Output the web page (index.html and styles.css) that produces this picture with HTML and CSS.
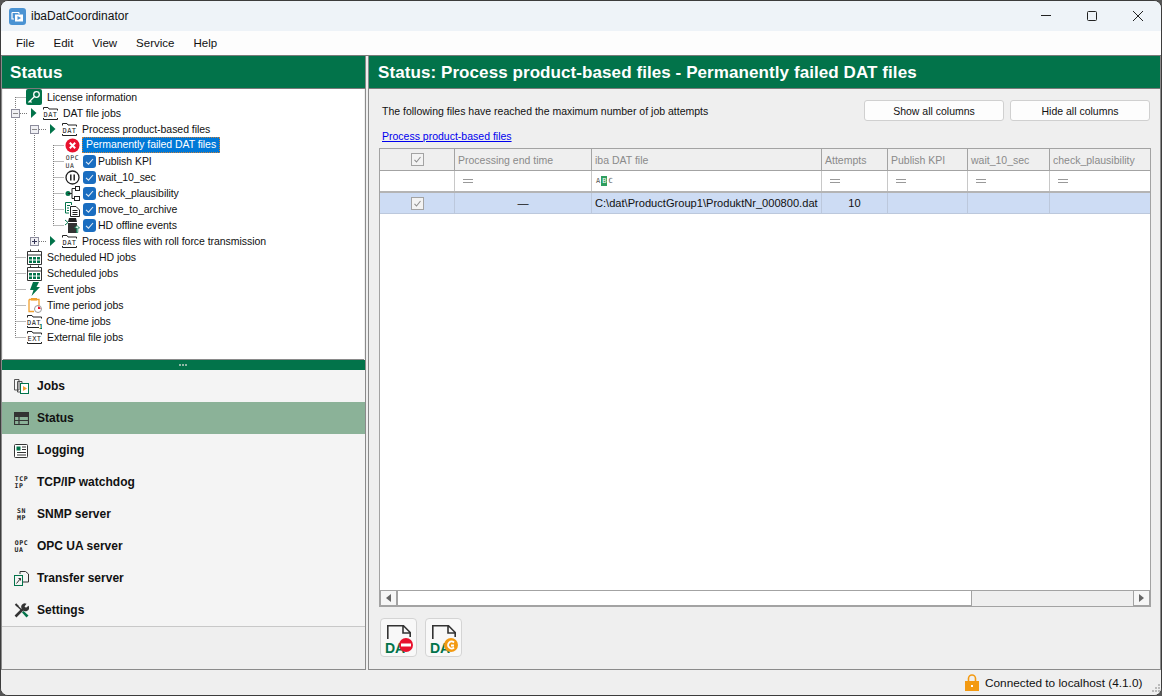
FILE: index.html
```html
<!doctype html>
<html>
	<head>
		<meta charset="utf-8">
		<title>ibaDatCoordinator</title>
		<link rel="stylesheet" href="styles.css">
	</head>
	<body>
		<svg class="defs" width="0" height="0">
			<symbol id="i-folder" viewBox="0 0 15 16">
				<path d="M.5 4.500V2.500H5L6 4H14.500V5.500M.5 13V14.500H14.500V13" fill="none" stroke="#222"/>
			</symbol>
			<symbol id="i-cal" viewBox="0 0 15 16">
				<path d="M.5 2.500H14.500V15.500H.5ZM.5 6H14.500M3.500 .5V3M11.500 .5V3" fill="none" stroke="#333"/>
				<path d="M2 8h3v2.500H2zM6 8h3v2.500H6zM10 8h3v2.500h-3zM2 11.500h3V14H2zM6 11.500h3V14H6zM10 11.500h3V14h-3z" fill="#02734a"/>
			</symbol>
			<symbol id="i-check" viewBox="0 0 13 13">
				<rect width="13" height="13" rx="3" fill="#1a6dc0"/>
				<path d="M3 6.800L5.500 9.200L10 4" fill="none" stroke="#dfeaf6" stroke-width="1.100"/>
			</symbol>
			<symbol id="i-tri" viewBox="0 0 7 10">
				<path d="M1 0L6.500 5L1 10Z" fill="#02734a"/>
			</symbol>
			<symbol id="i-eq" viewBox="0 0 10 5">
				<path d="M0 .5H10M0 3.500H10" stroke="#999"/>
			</symbol>
			<symbol id="i-tick" viewBox="0 0 13 13">
				<rect x=".5" y=".5" width="12" height="12" fill="#f3f3f3" stroke="#a3a3a3"/>
				<path d="M3.500 6.800L5.500 9L9.500 4" fill="none" stroke="#8f8f8f" stroke-width="1.100"/>
			</symbol>
		</svg>

		<div class="window">
			<div class="titlebar">
				<svg class="app-icon" width="17" height="17" viewBox="0 0 17 17">
					<rect width="17" height="17" rx="3" fill="#4b93d3"/>
					<path d="M3 4.500H10M3 4.500V11H5M10 4.500V6" fill="none" stroke="#fff" stroke-width="1.200"/>
					<rect x="6" y="6.500" width="8" height="7" fill="#fff"/>
					<path d="M8.500 8L12 10L8.500 12Z" fill="#4b93d3"/>
				</svg>
				<span class="app-title">ibaDatCoordinator</span>
				<div class="win-buttons">
					<svg width="12" height="12" viewBox="0 0 12 12"><path d="M1 5.500H11" stroke="#222"/></svg>
					<svg width="12" height="12" viewBox="0 0 12 12"><rect x="1.500" y="1.500" width="9" height="9" rx="1" fill="none" stroke="#222"/></svg>
					<svg width="12" height="12" viewBox="0 0 12 12"><path d="M1 1L11 11M11 1L1 11" stroke="#222"/></svg>
				</div>
			</div>

			<div class="menubar">
				<span>File</span>
				<span>Edit</span>
				<span>View</span>
				<span>Service</span>
				<span>Help</span>
			</div>

			<div class="main">
				<div class="left">
					<div class="panel-head">Status</div>
					<div class="tree">
						<svg class="tree-lines" width="70" height="270">
							<path d="M12.500 8V248.500M12.500 8.500H23M12.500 168.500H23M12.500 184.500H23M12.500 200.500H23M12.500 216.500H23M12.500 232.500H23M12.500 248.500H23M31.500 40V152M50.500 56V136.500M50.500 56.500H61M50.500 72.500H61M50.500 88.500H61M50.500 104.500H61M50.500 120.500H61M50.500 136.500H61" fill="none" stroke="#777" stroke-dasharray="1 1"/>
							<path d="M17 24.500H24M36 40.500H43M36 152.500H43" fill="none" stroke="#777" stroke-dasharray="1 1"/>
						</svg>

						<div class="row l0">
							<svg class="icon" width="16" height="16" viewBox="0 0 16 16">
								<rect width="16" height="16" rx="2" fill="#02734a"/>
								<circle cx="10.500" cy="5.500" r="2.800" fill="none" stroke="#fff" stroke-width="1.300"/>
								<path d="M8.500 7.500L2.500 13.500M4 12L5.500 13.500" fill="none" stroke="#fff" stroke-width="1.300"/>
							</svg>
							<span class="label">License information</span>
						</div>
						<div class="row l1">
							<span class="expander minus"></span>
							<svg class="tri" width="7" height="10"><use href="#i-tri"/></svg>
							<svg class="icon" width="15" height="16" viewBox="0 0 15 16">
								<use href="#i-folder" width="15" height="16"/>
								<text x="7.500" y="11.500" class="icon-text big" text-anchor="middle">DAT</text>
							</svg>
							<span class="label">DAT file jobs</span>
						</div>
						<div class="row l2">
							<span class="expander minus"></span>
							<svg class="tri" width="7" height="10"><use href="#i-tri"/></svg>
							<svg class="icon" width="15" height="16" viewBox="0 0 15 16">
								<use href="#i-folder" width="15" height="16"/>
								<text x="7.500" y="11.500" class="icon-text big" text-anchor="middle">DAT</text>
							</svg>
							<span class="label">Process product-based files</span>
						</div>
						<div class="row l3">
							<svg class="icon" width="15" height="15" viewBox="0 0 15 15">
								<circle cx="7.500" cy="7.500" r="7" fill="#e8112d"/>
								<path d="M4.800 4.800L10.200 10.200M10.200 4.800L4.800 10.200" stroke="#fff" stroke-width="2"/>
							</svg>
							<span class="selected">Permanently failed DAT files</span>
						</div>
						<div class="row l3">
							<svg class="icon" width="15" height="16" viewBox="0 0 15 16">
								<text x="7.500" y="6.500" class="icon-text" text-anchor="middle">OPC</text>
								<text x="5" y="14.500" class="icon-text" text-anchor="middle">UA</text>
							</svg>
							<svg class="check" width="13" height="13"><use href="#i-check"/></svg>
							<span class="label">Publish KPI</span>
						</div>
						<div class="row l3">
							<svg class="icon" width="15" height="15" viewBox="0 0 15 15">
								<circle cx="7.500" cy="7.500" r="6.500" fill="none" stroke="#222" stroke-width="1.300"/>
								<path d="M5.800 4.500V10.500M9.200 4.500V10.500" stroke="#222" stroke-width="1.500"/>
							</svg>
							<svg class="check" width="13" height="13"><use href="#i-check"/></svg>
							<span class="label">wait_10_sec</span>
						</div>
						<div class="row l3">
							<svg class="icon" width="15" height="15" viewBox="0 0 15 15">
								<circle cx="3" cy="7.500" r="2.500" fill="#02734a"/>
								<path d="M3 7.500H7V2.500H10M7 7.500V12.500H9" fill="none" stroke="#222"/>
								<rect x="10.500" y=".5" width="4" height="4" fill="#fff" stroke="#222"/>
								<rect x="9.500" y="10.500" width="5" height="4" fill="#fff" stroke="#222"/>
							</svg>
							<svg class="check" width="13" height="13"><use href="#i-check"/></svg>
							<span class="label">check_plausibility</span>
						</div>
						<div class="row l3">
							<svg class="icon" width="15" height="15" viewBox="0 0 15 15">
								<path d="M.5 .5H6.500V3M.5 .5V11H4M2 3.500H5M2 6H4M2 8.500H4" fill="none" stroke="#02734a"/>
								<path d="M5.500 4.500H11L14.500 8V14.500H5.500ZM7.500 8.500H12.500M7.500 10.500H12.500M7.500 12.500H12.500" fill="#fff" stroke="#222"/>
							</svg>
							<svg class="check" width="13" height="13"><use href="#i-check"/></svg>
							<span class="label">move_to_archive</span>
						</div>
						<div class="row l3">
							<svg class="icon" width="15" height="15" viewBox="0 0 15 15">
								<path d="M4 0H11L12 4H3Z" fill="#222"/>
								<path d="M3 5H12V15H3Z" fill="#333"/>
								<path d="M0 2L3 4.500L0 7" fill="none" stroke="#02734a"/>
								<path d="M11.500 14.500V10H9.500L12 7.500L14.500 10H12.800V14.500Z" fill="#fff" stroke="#02734a" stroke-width=".8"/>
							</svg>
							<svg class="check" width="13" height="13"><use href="#i-check"/></svg>
							<span class="label">HD offline events</span>
						</div>
						<div class="row l2">
							<span class="expander plus"></span>
							<svg class="tri" width="7" height="10"><use href="#i-tri"/></svg>
							<svg class="icon" width="15" height="16" viewBox="0 0 15 16">
								<use href="#i-folder" width="15" height="16"/>
								<text x="7.500" y="11.500" class="icon-text big" text-anchor="middle">DAT</text>
							</svg>
							<span class="label">Process files with roll force transmission</span>
						</div>
						<div class="row l0">
							<svg class="icon cal" width="15" height="16"><use href="#i-cal"/></svg>
							<span class="label">Scheduled HD jobs</span>
						</div>
						<div class="row l0">
							<svg class="icon cal" width="15" height="16"><use href="#i-cal"/></svg>
							<span class="label">Scheduled jobs</span>
						</div>
						<div class="row l0">
							<svg class="icon" width="16" height="16" viewBox="0 0 16 16">
								<path d="M7 1H13L10.500 6H14L5.500 15L7.500 9H4Z" fill="#02734a"/>
							</svg>
							<span class="label">Event jobs</span>
						</div>
						<div class="row l0">
							<svg class="icon" width="16" height="16" viewBox="0 0 16 16">
								<path d="M3 2.500H13V9M3 2.500V14.500H8" fill="none" stroke="#f0a030" stroke-width="1.300"/>
								<path d="M5 1H11V3.500H5Z" fill="#f0a030"/>
								<circle cx="12" cy="12" r="3.500" fill="#fff" stroke="#999"/>
								<path d="M12 9.500V12H14.500A2.500 2.500 0 0 0 12 9.500Z" fill="#e8112d"/>
							</svg>
							<span class="label">Time period jobs</span>
						</div>
						<div class="row l0">
							<svg class="icon cal" width="15" height="16" viewBox="0 0 15 16">
								<path d="M.5 4.500V2.500H5L6 4H14.500V5.500M.5 13V14.500H12" fill="none" stroke="#222"/>
								<text x="7" y="11.500" class="icon-text big" text-anchor="middle">DAT</text>
								<text x="12" y="15.500" class="icon-one">1</text>
							</svg>
							<span class="label tight">One-time jobs</span>
						</div>
						<div class="row l0">
							<svg class="icon cal" width="15" height="16" viewBox="0 0 15 16">
								<use href="#i-folder" width="15" height="16"/>
								<text x="7.500" y="11.500" class="icon-text big" text-anchor="middle">EXT</text>
							</svg>
							<span class="label">External file jobs</span>
						</div>
					</div>

					<div class="splitter"><span></span><span></span><span></span></div>

					<div class="nav">
						<div class="nav-item">
							<svg width="15" height="15" viewBox="0 0 15 15">
								<path d="M.5 .5H5V11H.5ZM3.500 2.500H8V13H3.500Z" fill="#f4f4f4" stroke="#444" stroke-width=".9"/>
								<rect x="6.500" y="4.500" width="8" height="10" fill="#fff" stroke="#02734a"/>
								<path d="M9 7L13 9.500L9 12Z" fill="#f0a030"/>
							</svg>
							<span>Jobs</span>
						</div>
						<div class="nav-item active">
							<svg width="15" height="15" viewBox="0 0 15 15">
								<path d="M.5 1.500H14.500V13.500H.5ZM.5 5.500H14.500M.5 9.500H14.500M5 5V13.500" fill="none" stroke="#333" stroke-width="1.200"/>
								<path d="M.5 1.500H14.500V5H.5Z" fill="#333"/>
							</svg>
							<span>Status</span>
						</div>
						<div class="nav-item">
							<svg width="15" height="15" viewBox="0 0 15 15">
								<rect x=".5" y="1.500" width="13" height="13" rx="1" fill="#fff" stroke="#333"/>
								<rect x="2.500" y="3.500" width="4" height="4" fill="#02734a"/>
								<path d="M8 4H12M8 6.500H12M3 9.500H12M3 12H12" stroke="#333"/>
							</svg>
							<span>Logging</span>
						</div>
						<div class="nav-item">
							<svg width="15" height="16" viewBox="0 0 15 16">
								<text x="7.500" y="6.500" class="icon-text" text-anchor="middle">TCP</text>
								<text x="5" y="14" class="icon-text" text-anchor="middle">IP</text>
							</svg>
							<span>TCP/IP watchdog</span>
						</div>
						<div class="nav-item">
							<svg width="15" height="16" viewBox="0 0 15 16">
								<text x="7.500" y="6.500" class="icon-text" text-anchor="middle">SN</text>
								<text x="7.500" y="14" class="icon-text" text-anchor="middle">MP</text>
							</svg>
							<span>SNMP server</span>
						</div>
						<div class="nav-item">
							<svg width="15" height="16" viewBox="0 0 15 16">
								<text x="7.500" y="6.500" class="icon-text" text-anchor="middle">OPC</text>
								<text x="5" y="14" class="icon-text" text-anchor="middle">UA</text>
							</svg>
							<span>OPC UA server</span>
						</div>
						<div class="nav-item">
							<svg width="15" height="15" viewBox="0 0 15 15">
								<path d="M6 3V.5H11.500L14.500 3V11H9" fill="none" stroke="#333"/>
								<rect x=".5" y="4.500" width="8" height="10" fill="none" stroke="#02734a"/>
								<path d="M2.500 12.500L6.500 7.500M4.500 7.500H6.500V9.500" fill="none" stroke="#333"/>
							</svg>
							<span>Transfer server</span>
						</div>
						<div class="nav-item">
							<svg width="15" height="15" viewBox="0 0 15 15">
								<path d="M1.500 1L4 3.500" fill="none" stroke="#333" stroke-width="2"/>
								<path d="M3.500 3L8 7.500" fill="none" stroke="#333" stroke-width="1.500"/>
								<path d="M1.500 13.500L9.500 5.500" fill="none" stroke="#333" stroke-width="2.500"/>
								<path d="M8.500 6.500A3.500 3.500 0 0 1 12.500 .8L10.500 3.500L12 4.800L14.500 2.800A3.500 3.500 0 0 1 8.500 6.500Z" fill="#333"/>
								<path d="M8 9.500L9.500 8L14.500 12.500L12.500 14.500Z" fill="#02734a"/>
							</svg>
							<span>Settings</span>
						</div>
					</div>
					<div class="nav-rest"></div>
				</div>

				<div class="right">
					<div class="panel-head">Status: Process product-based files - Permanently failed DAT files</div>
					<div class="content">
						<div class="toolbar">
							<span class="info">The following files have reached the maximum number of job attempts</span>
							<button class="btn">Show all columns</button>
							<button class="btn">Hide all columns</button>
						</div>
						<a class="job-link" href="#">Process product-based files</a>

						<div class="grid">
							<div class="grid-row head">
								<div class="cell mid"><svg width="13" height="13"><use href="#i-tick"/></svg></div>
								<div class="cell">Processing end time</div>
								<div class="cell">iba DAT file</div>
								<div class="cell">Attempts</div>
								<div class="cell">Publish KPI</div>
								<div class="cell">wait_10_sec</div>
								<div class="cell">check_plausibility</div>
							</div>
							<div class="grid-row filter">
								<div class="cell"></div>
								<div class="cell"><svg class="eq" width="10" height="5"><use href="#i-eq"/></svg></div>
								<div class="cell abc"><span>A</span><b>B</b><span>C</span></div>
								<div class="cell"><svg class="eq" width="10" height="5"><use href="#i-eq"/></svg></div>
								<div class="cell"><svg class="eq" width="10" height="5"><use href="#i-eq"/></svg></div>
								<div class="cell"><svg class="eq" width="10" height="5"><use href="#i-eq"/></svg></div>
								<div class="cell"><svg class="eq" width="10" height="5"><use href="#i-eq"/></svg></div>
							</div>
							<div class="grid-row data">
								<div class="cell mid"><svg width="13" height="13"><use href="#i-tick"/></svg></div>
								<div class="cell mid">—</div>
								<div class="cell">C:\dat\ProductGroup1\ProduktNr_000800.dat</div>
								<div class="cell mid">10</div>
								<div class="cell"></div>
								<div class="cell"></div>
								<div class="cell"></div>
							</div>
							<div class="grid-empty"></div>
							<div class="scrollbar">
								<span class="sb-btn"><svg width="5" height="8"><path d="M5 0V8L0 4Z" fill="#666"/></svg></span>
								<span class="sb-thumb"></span>
								<span class="sb-track"></span>
								<span class="sb-btn"><svg width="5" height="8"><path d="M0 0V8L5 4Z" fill="#666"/></svg></span>
							</div>
						</div>

						<div class="actions">
							<button class="act-btn">
								<svg width="30" height="32" viewBox="0 0 30 32">
									<path d="M3.800 15V1.800H19.500L26.200 8.500V13M19 2V9H26" fill="none" stroke="#333" stroke-width="1.600"/>
									<text x="1" y="28.500" class="act-text">DA</text>
									<circle cx="22" cy="21" r="7" fill="#e8112d"/>
									<rect x="17" y="19.500" width="10" height="3" fill="#fff"/>
								</svg>
							</button>
							<button class="act-btn">
								<svg width="30" height="32" viewBox="0 0 30 32">
									<path d="M3.800 15V1.800H19.500L26.200 8.500V13M19 2V9H26" fill="none" stroke="#333" stroke-width="1.600"/>
									<text x="1" y="28.500" class="act-text">DA</text>
									<circle cx="22" cy="21" r="7" fill="#f39a12"/>
									<path d="M25 18.500A3.500 3.500 0 1 0 25 23.500M25 21.500H22" fill="none" stroke="#fff" stroke-width="1.800"/>
								</svg>
							</button>
						</div>
					</div>
				</div>
			</div>

			<div class="statusbar">
				<svg width="14" height="17" viewBox="0 0 14 17">
					<path d="M3.500 7V4.500A3.500 3.500 0 0 1 10.500 4.500V7" fill="none" stroke="#f39a12" stroke-width="1.600"/>
					<rect y="7" width="14" height="10" fill="#f39a12"/>
					<rect x="6" y="11" width="2" height="2" fill="#fff"/>
				</svg>
				<span class="conn">Connected to localhost (4.1.0)</span>
				<svg class="grip" width="8" height="8" viewBox="0 0 8 8">
					<path d="M6 0h2v2H6zM3 3h2v2H3zM6 3h2v2H6zM0 6h2v2H0zM3 6h2v2H3zM6 6h2v2H6z" fill="#bbb"/>
				</svg>
			</div>
		</div>
	</body>
</html>
```

FILE: styles.css
```css
* {
	box-sizing: border-box;
}

html, body {
	margin: 0;
	height: 100%;
	overflow: hidden;
}

body {
	background: #555;
	font-family: "Liberation Sans", Arial, sans-serif;
	font-size: 10.500px;
	color: #111;
}

.defs {
	position: absolute;
}

.icon-text {
	font-family: "DejaVu Sans Mono", monospace;
	font-size: 6.500px;
	letter-spacing: .6px;
	fill: #222;
}

.icon-text.big {
	font-size: 7px;
	letter-spacing: .5px;
}

.icon-one {
	font-size: 7px;
	font-weight: bold;
	fill: #02734a;
}

.window {
	width: 1162px;
	height: 696px;
	display: flex;
	flex-direction: column;
	background: #efefef;
	border: 1px solid #3c3c3c;
	border-radius: 8px;
	overflow: hidden;
}

.titlebar {
	height: 30px;
	display: flex;
	align-items: center;
	padding-left: 8px;
	background: #eef3f8;
}

.app-title {
	margin-left: 5px;
	font-size: 12px;
}

.win-buttons {
	margin-left: auto;
	display: flex;
	gap: 34px;
	padding-right: 17px;
}

.menubar {
	height: 25px;
	display: flex;
	align-items: center;
	gap: 19px;
	padding-left: 15px;
	background: #fdfdfd;
	border-bottom: 1px solid #7a7a7a;
	font-size: 11.500px;
}

.main {
	height: 614px;
	display: flex;
	gap: 2px;
}

.left {
	width: 365px;
	display: flex;
	flex-direction: column;
	border: 1px solid #8a8a8a;
	border-top: 0;
}

.right {
	flex: 1;
	display: flex;
	flex-direction: column;
	border-left: 1px solid #8a8a8a;
	border-right: 1px solid #8a8a8a;
	border-bottom: 1px solid #8a8a8a;
}

.panel-head {
	height: 33px;
	flex: none;
	padding: 7px 0 0 8px;
	background: #02734a;
	border-bottom: 1px solid #7a7a7a;
	color: #fff;
	font-size: 17px;
	letter-spacing: .08px;
	font-weight: bold;
}

.right .panel-head {
	padding-left: 9px;
}

.tree {
	position: relative;
	height: 271px;
	flex: none;
	background: #fff;
	margin-left: 1px;
	margin-right: 1px;
	border-bottom: 1px solid #8a8a8a;
	letter-spacing: -.05px;
}

.tree-lines {
	position: absolute;
	left: 0;
	top: 0;
}

.row {
	position: relative;
	height: 16px;
	display: flex;
	align-items: center;
}

.l0 {
	padding-left: 23px;
}

.l0 .label {
	margin-left: 5px;
}

.l0 .cal {
	margin-left: 1px;
}

.l0 .tight {
	margin-left: 4px;
}

.l1 {
	padding-left: 8px;
}

.l2 {
	padding-left: 27px;
}

.l3 {
	padding-left: 62px;
}

.l3 .label {
	margin-left: 2px;
}

.expander {
	width: 9px;
	height: 9px;
	flex: none;
	border: 1px solid #8c8c9c;
	background: linear-gradient(#888, #888) center / 5px 1px no-repeat, #f0f0f4;
}

.plus {
	background: linear-gradient(#335, #335) center / 5px 1px no-repeat,
		linear-gradient(#335, #335) center / 1px 5px no-repeat, #f0f0f4;
}

.tri {
	flex: none;
	margin-left: 10px;
	margin-right: 6px;
}

.icon {
	flex: none;
}

.label {
	margin-left: 5px;
	white-space: nowrap;
}

.check {
	flex: none;
	margin-left: 3px;
}

.selected {
	margin-left: 2px;
	height: 16px;
	padding: 0 3px;
	background: #0078d7;
	border: 1px dotted #c8803c;
	color: #fff;
	line-height: 13px;
}

.splitter {
	height: 10px;
	flex: none;
	display: flex;
	justify-content: center;
	align-items: center;
	gap: 1px;
	background: #02734a;
	padding-right: 1px;
}

.splitter span {
	width: 2px;
	height: 2px;
	background: #8fb8a6;
}

.nav {
	background: #f4f4f4;
	border-bottom: 1px solid #c8c8c8;
	flex: none;
}

.nav-item {
	height: 32px;
	display: flex;
	align-items: center;
	gap: 8px;
	padding-left: 12px;
	font-size: 12px;
	font-weight: bold;
}

.nav-item.active {
	background: #8bb298;
}

.nav-rest {
	flex: 1;
	background: #efefef;
}

.content {
	flex: 1;
	display: flex;
	flex-direction: column;
	padding: 11px 9px 12px 10px;
	min-height: 0;
}

.toolbar {
	display: flex;
	align-items: center;
	gap: 6px;
	height: 21px;
	padding: 0 1px 0 3px;
}

.info {
	margin-right: auto;
}

.btn {
	width: 140px;
	height: 21px;
	padding: 0;
	background: #fdfdfd;
	border: 1px solid #d0d0d0;
	border-radius: 3px;
	font: inherit;
	color: #111;
}

.job-link {
	display: block;
	margin: 9px 0 5px 3px;
	height: 13px;
	line-height: 13px;
	color: #0000ee;
}

.grid {
	flex: 1;
	display: flex;
	flex-direction: column;
	background: #fff;
	border: 1px solid #a3a3a3;
	min-height: 0;
}

.grid-row {
	display: grid;
	grid-template-columns: 75px 137px 230px 66px 80px 82px 100px;
	flex: none;
}

.cell {
	display: flex;
	align-items: center;
	padding-left: 3px;
	border-right: 1px solid #a3a3a3;
	white-space: nowrap;
	overflow: hidden;
}

.cell:last-child {
	border-right: 0;
}

.mid {
	justify-content: center;
	padding-left: 0;
}

.head {
	height: 22px;
	background: #efefef;
	border-bottom: 1px solid #a3a3a3;
	color: #8a8a8a;
}

.filter {
	height: 22px;
	border-bottom: 2px solid #b4b4b4;
}

.filter .cell {
	border-right-color: #c8c8c8;
	padding-left: 8px;
}

.filter .abc {
	font-family: "DejaVu Sans Mono", monospace;
	font-size: 7px;
	color: #555;
	padding-left: 4px;
	gap: 1px;
}

.abc b {
	background: #2f9e5e;
	color: #fff;
	padding: 1px;
	font-weight: normal;
}

.data {
	height: 21px;
	background: #cddcf4;
	border-bottom: 1px solid #bcc8dc;
	font-size: 11.100px;
}

.data .cell {
	border-right-color: #bcc8dc;
}

.grid-empty {
	flex: 1;
}

.scrollbar {
	height: 16px;
	flex: none;
	display: flex;
	background: #efefef;
	border-top: 1px solid #a3a3a3;
}

.sb-btn {
	width: 17px;
	flex: none;
	display: flex;
	align-items: center;
	justify-content: center;
	border: 1px solid #a3a3a3;
	border-top: 0;
	background: #f6f6f6;
}

.sb-thumb {
	width: 575px;
	flex: none;
	background: #fff;
	border: 1px solid #a3a3a3;
	border-top: 0;
}

.sb-track {
	flex: 1;
}

.actions {
	display: flex;
	gap: 8px;
	margin-top: 11px;
	padding-left: 1px;
}

.act-btn {
	width: 37px;
	height: 39px;
	padding: 5px 0 0 3px;
	display: flex;
	background: #f8f8f8;
	border: 1px solid #d4d4d4;
	border-radius: 4px;
}

.act-text {
	font-size: 14px;
	font-weight: bold;
	fill: #02734a;
}

.statusbar {
	height: 25px;
	display: flex;
	align-items: center;
	padding-left: 964px;
	background: #efefef;
}

.conn {
	margin-left: 6px;
	font-size: 11.800px;
}

.grip {
	margin-left: auto;
	margin-right: 1px;
	align-self: flex-end;
	margin-bottom: 3px;
}
```
